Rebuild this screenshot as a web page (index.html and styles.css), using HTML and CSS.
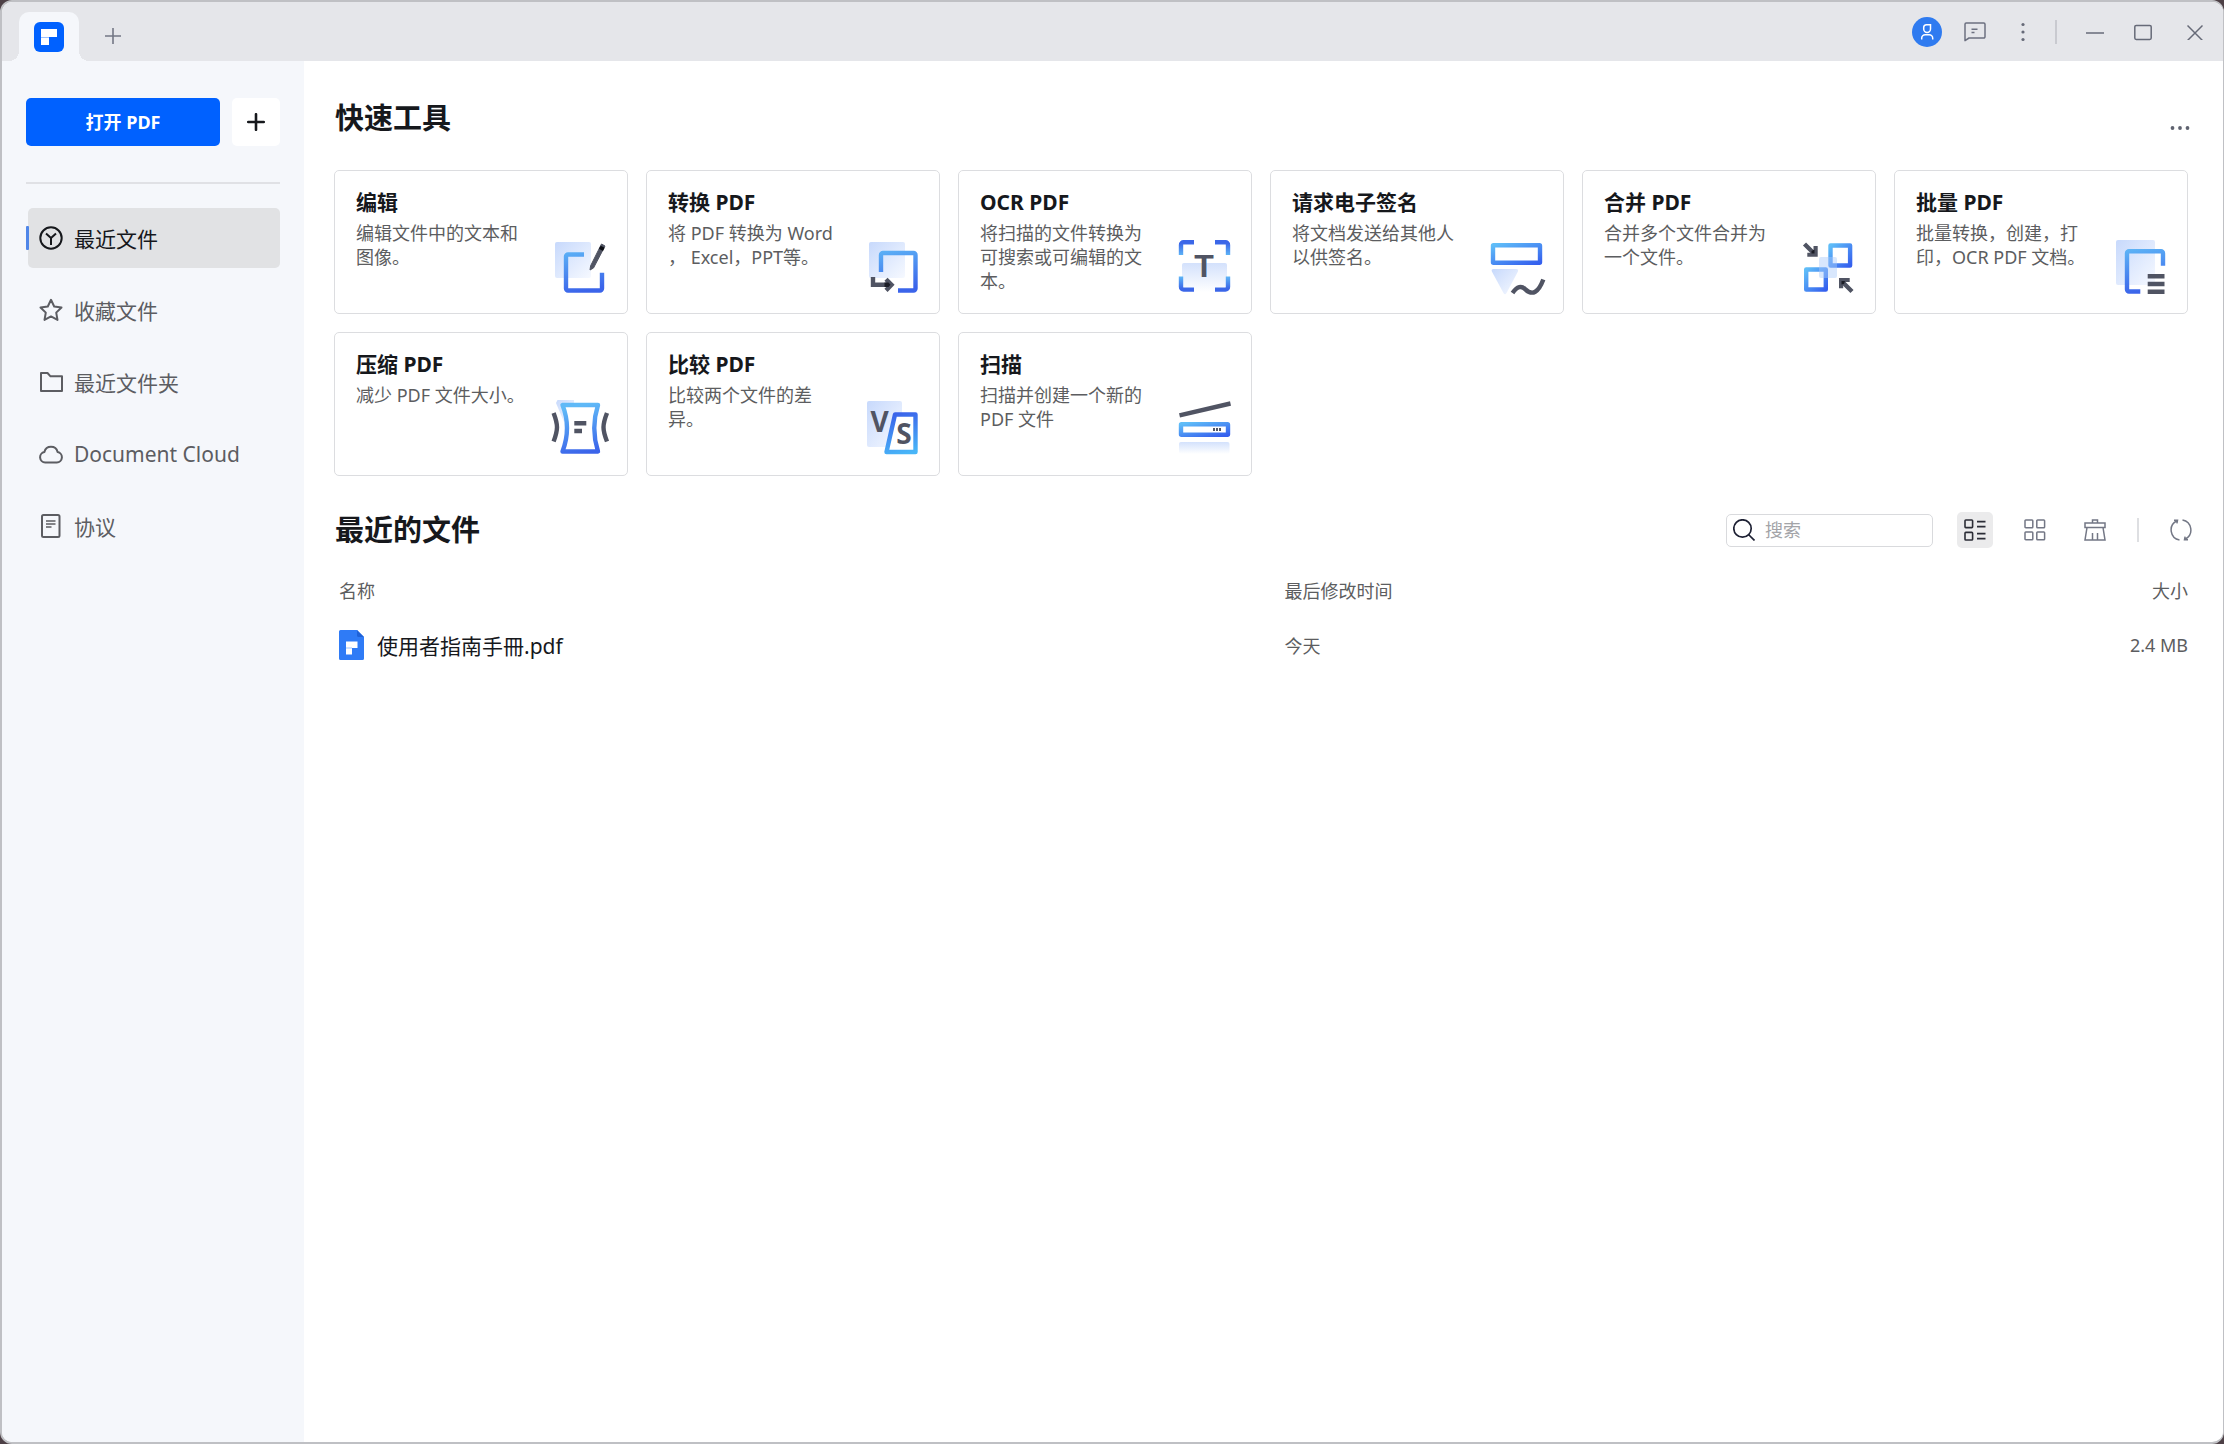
FILE: index.html
```html
<!DOCTYPE html>
<html lang="zh-CN">
<head>
    <meta charset="UTF-8">
    <meta name="viewport" content="width=device-width, initial-scale=1.0">
    <title>PDF</title>
    <link rel="stylesheet" href="styles.css">
</head>
<body>
    <!-- shared gradients for the tool icons -->
    <svg class="defs" width="0" height="0" aria-hidden="true">
        <defs>
            <linearGradient id="down" gradientUnits="userSpaceOnUse" x1="20" y1="10" x2="30" y2="56">
                <stop offset="0" stop-color="#5fb9f7"/>
                <stop offset="1" stop-color="#3b64ea"/>
            </linearGradient>
            <linearGradient id="up" gradientUnits="userSpaceOnUse" x1="34" y1="16" x2="44" y2="56">
                <stop offset="0" stop-color="#3b64ea"/>
                <stop offset="1" stop-color="#48b6f8"/>
            </linearGradient>
            <linearGradient id="box" x1="0" y1="0" x2="1" y2="1">
                <stop offset="0" stop-color="#5fbdf8"/>
                <stop offset="1" stop-color="#3560ee"/>
            </linearGradient>
            <linearGradient id="bracketTop" gradientUnits="userSpaceOnUse" x1="0" y1="4" x2="0" y2="20">
                <stop offset="0.2" stop-color="#3b66e8"/>
                <stop offset="1" stop-color="#5fb9f7"/>
            </linearGradient>
            <linearGradient id="bracketBottom" gradientUnits="userSpaceOnUse" x1="0" y1="40" x2="0" y2="56">
                <stop offset="0" stop-color="#5fb9f7"/>
                <stop offset="0.8" stop-color="#3b66e8"/>
            </linearGradient>
            <linearGradient id="soft" x1="0" y1="0" x2="1" y2="1">
                <stop offset="0" stop-color="#c7d9fc"/>
                <stop offset="1" stop-color="#f6f9ff"/>
            </linearGradient>
            <linearGradient id="fade" x1="0" y1="0" x2="0" y2="1">
                <stop offset="0" stop-color="#d3e1fc"/>
                <stop offset="1" stop-color="#ffffff"/>
            </linearGradient>
        </defs>
    </svg>

    <div class="window">
        <header class="titlebar">
            <button class="tab" aria-label="主页">
                <svg width="30" height="30" viewBox="0 0 30 30">
                    <rect width="30" height="30" rx="6" fill="#0061ff"/>
                    <path d="M7 7h16v8H7z" fill="#fff"/>
                    <path d="M7 16h8v7H7z" fill="#fff"/>
                    <path d="M7 15h8v1H7z" fill="#9cc2ff"/>
                </svg>
            </button>
            <button class="new-tab" aria-label="新标签页">
                <svg width="16" height="16" viewBox="0 0 16 16" stroke="#737785" stroke-width="1.6"><path d="M8 0v16M0 8h16"/></svg>
            </button>
            <div class="window-tools">
                <button class="win-btn" aria-label="账户">
                    <svg width="30" height="30" viewBox="0 0 30 30" fill="none" stroke="#fff" stroke-width="1.5">
                        <circle cx="15" cy="15" r="15" fill="#2f7bf0" stroke="none"/>
                        <path d="M14.5 7.8h4v4.2a3.4 3.4 0 0 1-6.8 0v-1.4a2.8 2.8 0 0 1 2.8-2.8z"/>
                        <path d="M9.7 22.5v-1.2a3.5 3.5 0 0 1 3.5-3.5h4a3.5 3.5 0 0 1 3.5 3.5v1.2"/>
                    </svg>
                </button>
                <button class="win-btn" aria-label="消息">
                    <svg width="22" height="20" viewBox="0 0 22 20" fill="none" stroke="#6c7080" stroke-width="1.5">
                        <path d="M1 18.6V2.2A1.2 1.2 0 0 1 2.2 1h17.6A1.2 1.2 0 0 1 21 2.2v12.6a1.2 1.2 0 0 1-1.2 1.2H5z" stroke-linejoin="round"/>
                        <path d="M7.5 7.2h6M7.5 10.4h3"/>
                    </svg>
                </button>
                <button class="win-btn" aria-label="更多">
                    <svg width="4" height="20" viewBox="0 0 4 20" fill="#666a78"><circle cx="2" cy="2.5" r="1.6"/><circle cx="2" cy="10" r="1.6"/><circle cx="2" cy="17.5" r="1.6"/></svg>
                </button>
                <span class="win-divider"></span>
                <button class="win-btn" aria-label="最小化">
                    <svg width="18" height="18" viewBox="0 0 18 18" stroke="#666a78" stroke-width="1.5"><path d="M0 10h18"/></svg>
                </button>
                <button class="win-btn" aria-label="最大化">
                    <svg width="18" height="18" viewBox="0 0 18 18" fill="none" stroke="#666a78" stroke-width="1.5"><rect x="0.8" y="2.4" width="16.4" height="14" rx="1.4"/></svg>
                </button>
                <button class="win-btn close" aria-label="关闭">
                    <svg width="16" height="16" viewBox="0 0 16 16" stroke="#666a78" stroke-width="1.5"><path d="M.5 1.5l15 15M15.5 1.5l-15 15"/></svg>
                </button>
            </div>
        </header>

        <div class="body">
            <aside class="sidebar">
                <div class="open-row">
                    <button class="open-btn">打开 PDF</button>
                    <button class="add-btn" aria-label="新建">
                        <svg width="18" height="18" viewBox="0 0 18 18" stroke="#16181c" stroke-width="2.6" stroke-linecap="round"><path d="M9 1.2v15.6M1.2 9h15.6"/></svg>
                    </button>
                </div>
                <nav class="menu">
                    <a href="#recent" class="menu-item active">
                        <svg class="menu-icon" viewBox="0 0 24 24">
                            <circle cx="12" cy="12" r="10.7"/>
                            <path d="M7 7.5l5 4.5 5-4.5M12 12v7"/>
                        </svg>
                        最近文件
                    </a>
                    <a href="#starred" class="menu-item">
                        <svg class="menu-icon" viewBox="0 0 24 24">
                            <path d="M12 1.8l3.2 6.7 7.3 1-5.3 5.1 1.3 7.3-6.5-3.5-6.5 3.5 1.3-7.3L1.5 9.5l7.3-1z"/>
                        </svg>
                        收藏文件
                    </a>
                    <a href="#folders" class="menu-item">
                        <svg class="menu-icon" viewBox="0 0 24 24">
                            <path d="M2 3h6.5l3 3.3H23V21H2z"/>
                        </svg>
                        最近文件夹
                    </a>
                    <a href="#cloud" class="menu-item">
                        <svg class="menu-icon" viewBox="0 0 24 24">
                            <path d="M6.2 20.5a5.3 5.3 0 0 1-.8-10.5 6.8 6.8 0 0 1 13.2 0 5.3 5.3 0 0 1-.8 10.5z"/>
                        </svg>
                        Document Cloud
                    </a>
                    <a href="#agreement" class="menu-item">
                        <svg class="menu-icon" viewBox="0 0 24 24">
                            <rect x="3" y="1" width="17.5" height="22" rx="1.5"/>
                            <path d="M7 7h9.5M7 10h9.5M7 13h5.5" stroke-width="1.5"/>
                        </svg>
                        协议
                    </a>
                </nav>
            </aside>

            <main class="main">
                <div class="section-head">
                    <h1>快速工具</h1>
                    <button class="more-btn" aria-label="更多工具">
                        <svg width="20" height="4" viewBox="0 0 20 4" fill="#5f6370"><circle cx="2.5" cy="2" r="1.9"/><circle cx="10" cy="2" r="1.9"/><circle cx="17.5" cy="2" r="1.9"/></svg>
                    </button>
                </div>

                <div class="tools">
                    <a href="#edit" class="card">
                        <h2>编辑</h2>
                        <p>编辑文件中的文本和图像。</p>
                        <svg class="card-icon" viewBox="0 0 60 60">
                            <rect x="5" y="6" width="36" height="36" rx="2" fill="url(#soft)"/>
                            <path d="M34 18.5H18a2 2 0 0 0-2 2V52.5a2 2 0 0 0 2 2H50a2 2 0 0 0 2-2V36.7" fill="none" stroke="url(#down)" stroke-width="4.4"/>
                            <path d="M40 34l.6-4.2L51.5 8l3.5 2L43.5 32z" fill="#505463" stroke="#505463"/>
                            <path d="M49.8 11.2l4 2.2" stroke="#0c0e14" stroke-width="3.5"/>
                        </svg>
                    </a>
                    <a href="#convert" class="card">
                        <h2>转换 PDF</h2>
                        <p>将 PDF 转换为 Word<br>， Excel，PPT等。</p>
                        <svg class="card-icon" viewBox="0 0 60 60">
                            <rect x="7" y="6" width="36" height="36" rx="2" fill="url(#soft)"/>
                            <path d="M19 36V19a2 2 0 0 1 2-2H51.5a2 2 0 0 1 2 2V52.5a2 2 0 0 1-2 2H36" fill="none" stroke="url(#down)" stroke-width="4.4"/>
                            <path d="M11 41v7.8h17" fill="none" stroke="#505463" stroke-width="4.4"/>
                            <path d="M24 43.2l5.5 5.6-5.5 5.6" fill="none" stroke="#505463" stroke-width="4.4"/>
                            <path d="M22.5 46.6h4l2 2.2-2 2.2h-4z" fill="#1b1d26"/>
                        </svg>
                    </a>
                    <a href="#ocr" class="card">
                        <h2>OCR PDF</h2>
                        <p>将扫描的文件转换为可搜索或可编辑的文本。</p>
                        <svg class="card-icon" viewBox="0 0 60 60">
                            <rect x="8" y="27" width="45" height="29" rx="2" fill="url(#fade)"/>
                            <g fill="none" stroke="url(#bracketTop)" stroke-width="4.4">
                                <path d="M7 19V9a2.6 2.6 0 0 1 2.6-2.7H20"/>
                                <path d="M54 19V9a2.6 2.6 0 0 0-2.6-2.7H41"/>
                            </g>
                            <g fill="none" stroke="url(#bracketBottom)" stroke-width="4.4">
                                <path d="M7 40.5v10.4a2.6 2.6 0 0 0 2.6 2.7H20"/>
                                <path d="M54 40.5v10.4a2.6 2.6 0 0 1-2.6 2.7H41"/>
                            </g>
                            <text class="glyph glyph-t" x="30" y="41">T</text>
                        </svg>
                    </a>
                    <a href="#sign" class="card">
                        <h2>请求电子签名</h2>
                        <p>将文档发送给其他人以供签名。</p>
                        <svg class="card-icon" viewBox="0 0 60 60">
                            <rect x="7" y="9.2" width="47" height="17.5" rx="0.5" fill="none" stroke="url(#box)" stroke-width="4.4"/>
                            <path d="M7.5 33h22.5q3 0 1.8 2.8L20.5 57q-1.5 2.4-3 0L6 35.8Q4.8 33 7.5 33z" fill="url(#soft)"/>
                            <path d="M26.5 57q7-10 13-3.5 10.5 9.5 17.8-10" fill="none" stroke="#505463" stroke-width="4.4"/>
                        </svg>
                    </a>
                    <a href="#merge" class="card">
                        <h2>合并 PDF</h2>
                        <p>合并多个文件合并为一个文件。</p>
                        <svg class="card-icon" viewBox="0 0 60 60">
                            <rect x="32.5" y="9.5" width="19.6" height="20" fill="none" stroke="url(#box)" stroke-width="4.4" stroke-linejoin="round"/>
                            <rect x="8.2" y="33.5" width="19.6" height="20" fill="none" stroke="url(#box)" stroke-width="4.4" stroke-linejoin="round"/>
                            <rect x="21" y="21" width="18" height="21" rx="2" fill="#a9c9fb" opacity="0.45"/>
                            <path d="M6.5 8l10 10M54 55.5l-10-10" stroke="#505463" stroke-width="4.4"/>
                            <path d="M19.7 10v10.7H9.3v-4h5l1.2-2V10zM41 52.3V42h10.7v4h-5l-1.5 2v4.3z" fill="#505463"/>
                            <path d="M13.5 15l3-1.5v4h-3zM43.5 45h3.5l-1 3-2.5.5z" fill="#1b1d26"/>
                        </svg>
                    </a>
                    <a href="#batch" class="card">
                        <h2>批量 PDF</h2>
                        <p>批量转换，创建，打印，OCR PDF 文档。</p>
                        <svg class="card-icon" viewBox="0 0 60 60">
                            <rect x="6" y="4" width="39" height="45" rx="2" fill="url(#soft)"/>
                            <path d="M53 29.7V17.2a2 2 0 0 0-2-2H19a2 2 0 0 0-2 2V53.5a2 2 0 0 0 2 2H30.3" fill="none" stroke="url(#down)" stroke-width="4.4"/>
                            <path d="M37.7 40.3h16.8M37.7 48h16.8M37.7 55.7h16.8" stroke="#505463" stroke-width="4.6"/>
                        </svg>
                    </a>
                    <a href="#compress" class="card">
                        <h2>压缩 PDF</h2>
                        <p>减少 PDF 文件大小。</p>
                        <svg class="card-icon" viewBox="0 0 60 60">
                            <path d="M7.5 2H24v16L14 24 6 5z" fill="url(#soft)"/>
                            <path d="M12.5 7H48Q40.5 30 48 53.5H12.5Q21.5 30 12.5 7z" fill="#fff" stroke="url(#down)" stroke-width="4.4" stroke-linejoin="round"/>
                            <path d="M3.6 15Q7 24 7 29.3T3.6 43.500M57 15q-3.500 9-3.500 14.300T57 43.500" fill="none" stroke="#505463" stroke-width="4.4"/>
                            <path d="M24.3 25.3h12M24.3 33h7.7" stroke="#505463" stroke-width="4.4"/>
                        </svg>
                    </a>
                    <a href="#compare" class="card">
                        <h2>比较 PDF</h2>
                        <p>比较两个文件的差<br>异。</p>
                        <svg class="card-icon" viewBox="0 0 60 60">
                            <rect x="5" y="3" width="35" height="46" rx="2" fill="url(#soft)"/>
                            <path d="M33 16.5H53.5V54H24.5z" fill="#fff" stroke="url(#up)" stroke-width="4.4" stroke-linejoin="round"/>
                            <text class="glyph glyph-vs" x="17.5" y="34">V</text>
                            <text class="glyph glyph-vs" x="42" y="46">S</text>
                        </svg>
                    </a>
                    <a href="#scan" class="card">
                        <h2>扫描</h2>
                        <p>扫描并创建一个新的 PDF 文件</p>
                        <svg class="card-icon" viewBox="0 0 60 60">
                            <path d="M5.5 17.3L56.5 5.5" stroke="#505463" stroke-width="4.4"/>
                            <rect x="7" y="26.2" width="47" height="10.6" rx="0.5" fill="#fff" stroke="url(#box)" stroke-width="4.4"/>
                            <path d="M39 31.5h2M42 31.5h2M45 31.5h2" stroke="#505463" stroke-width="3"/>
                            <rect x="5" y="44" width="50.5" height="12" rx="2" fill="url(#fade)"/>
                        </svg>
                    </a>
                </div>

                <div class="section-head recent-head">
                    <h1>最近的文件</h1>
                    <div class="toolbar">
                        <label class="search">
                            <svg width="22" height="22" viewBox="0 0 22 22" fill="none" stroke="#1d2033" stroke-width="1.7"><circle cx="9.5" cy="9.5" r="8.7"/><path d="M15.5 15.5l6 6"/></svg>
                            <input type="text" placeholder="搜索" aria-label="搜索">
                        </label>
                        <button class="tool-btn selected" aria-label="列表视图">
                            <svg width="22" height="22" viewBox="0 0 22 22" fill="none" stroke="#2b2d36" stroke-width="1.6"><rect x="1" y="1" width="7.6" height="7.6" rx="0.8"/><rect x="1" y="13.4" width="7.6" height="7.6" rx="0.8"/><path d="M13 2.6h8.5M13 7.6h8.5M13 14.6h8.5M13 19.6h8.5"/></svg>
                        </button>
                        <button class="tool-btn" aria-label="网格视图">
                            <svg width="22" height="22" viewBox="0 0 22 22" fill="none" stroke="#737785" stroke-width="1.5"><rect x="1" y="1" width="7.8" height="7.8" rx="0.8"/><rect x="1" y="13" width="7.8" height="7.8" rx="0.8"/><rect x="12.8" y="1" width="7.8" height="7.8" rx="0.8"/><rect x="12.8" y="13" width="7.8" height="7.8" rx="0.8"/></svg>
                        </button>
                        <button class="tool-btn" aria-label="清除">
                            <svg width="22" height="22" viewBox="0 0 22 22" fill="none" stroke="#737785" stroke-width="1.5"><path d="M8.5 4V1h5v3M1 4h20v4.5H1zM3 8.5L1 21h20L19 8.5M8.5 21v-7M13.5 21v-7"/></svg>
                        </button>
                        <span class="tool-divider"></span>
                        <button class="tool-btn" aria-label="刷新">
                            <svg width="22" height="22" viewBox="0 0 22 22" fill="none" stroke="#737785" stroke-width="1.5"><path d="M9.5 21A10.2 10.2 0 0 1 6.5 2M4 1.2h3.5l-.6 3.2M12.5 1A10.2 10.2 0 0 1 15.5 20M18 20.8h-3.5l.6-3.2"/></svg>
                        </button>
                    </div>
                </div>

                <table class="files">
                    <thead>
                        <tr>
                            <th class="col-name">名称</th>
                            <th>最后修改时间</th>
                            <th class="col-size">大小</th>
                        </tr>
                    </thead>
                    <tbody>
                        <tr>
                            <td>
                                <a href="#file" class="file">
                                    <svg width="26" height="30" viewBox="0 0 26 30">
                                        <path d="M1.5 0H18l7 7v21.5a1.5 1.5 0 0 1-1.5 1.5h-22A1.5 1.5 0 0 1 0 28.5v-27A1.5 1.5 0 0 1 1.5 0z" fill="#2f7bf6"/>
                                        <path d="M18 0l7 7h-5.5A1.5 1.5 0 0 1 18 5.5z" fill="#1f62d8"/>
                                        <path d="M7 11.5h11.5v6.5H13v6.5H7z" fill="#fff"/>
                                        <path d="M7 18h6" stroke="#9cc2ff"/>
                                    </svg>
                                    使用者指南手冊.pdf
                                </a>
                            </td>
                            <td>今天</td>
                            <td class="col-size">2.4 MB</td>
                        </tr>
                    </tbody>
                </table>
            </main>
        </div>
    </div>
</body>
</html>
```
FILE: styles.css
```css
* {
    box-sizing: border-box;
}
body {
    margin: 0;
    background: #4d4046;
    color: #16181c;
    font-family: "Noto Sans", "Noto Sans CJK SC", sans-serif;
    font-size: 18px;
}
h1, h2, p {
    margin: 0;
}
a {
    color: inherit;
    text-decoration: none;
}
button {
    display: flex;
    align-items: center;
    justify-content: center;
    padding: 0;
    border: none;
    background: none;
    color: inherit;
    font: inherit;
    cursor: pointer;
}
svg {
    display: block;
    flex-shrink: 0;
}
.defs {
    position: absolute;
}

.window {
    display: flex;
    flex-direction: column;
    min-height: 100vh;
    border: 2px solid #bfc0c4;
    border-right-width: 1px;
    border-radius: 12px;
    background: #fff;
    overflow: hidden;
}

/* title bar */
.titlebar {
    display: flex;
    align-items: flex-end;
    height: 59px;
    padding-left: 17px;
    background: #e5e6ea;
}
.tab {
    position: relative;
    width: 60px;
    height: 49px;
    border-radius: 10px 10px 0 0;
    background: #f5f7fb;
}
.tab::before,
.tab::after {
    content: "";
    position: absolute;
    bottom: 0;
    width: 10px;
    height: 10px;
}
.tab::before {
    right: 100%;
    background: radial-gradient(circle at 0 0, transparent 10px, #f5f7fb 10px);
}
.tab::after {
    left: 100%;
    background: radial-gradient(circle at 100% 0, transparent 10px, #f5f7fb 10px);
}
.new-tab {
    width: 48px;
    height: 50px;
    margin-left: 10px;
}
.window-tools {
    display: flex;
    align-items: center;
    height: 100%;
    margin-left: auto;
    padding-right: 4px;
}
.win-btn {
    width: 48px;
    height: 48px;
}
.win-divider {
    width: 2px;
    height: 24px;
    margin: 0 14px 0 8px;
    background: #c9cad0;
}
.close {
    margin-left: 4px;
}

.body {
    display: flex;
    flex: 1;
}

/* sidebar */
.sidebar {
    width: 302px;
    flex-shrink: 0;
    padding: 37px 24px;
    background: #f5f7fb;
}
.open-row {
    display: flex;
    gap: 12px;
    padding-bottom: 36px;
    border-bottom: 2px solid #e0e1e5;
}
.open-btn {
    flex: 1;
    height: 48px;
    padding-bottom: 2px;
    border-radius: 5px;
    background: #0061ff;
    color: #fff;
    font-weight: 700;
}
.add-btn {
    width: 48px;
    height: 48px;
    border-radius: 5px;
    background: #fff;
}
.menu {
    display: flex;
    flex-direction: column;
    gap: 12px;
    margin-top: 24px;
    padding-left: 2px;
}
.menu-item {
    position: relative;
    display: flex;
    align-items: center;
    gap: 11px;
    height: 60px;
    padding-left: 11px;
    border-radius: 5px;
    color: #5c5d62;
    font-size: 21px;
}
.menu-item.active {
    background: #e1e2e4;
    color: #16181c;
}
.menu-item.active::before {
    content: "";
    position: absolute;
    left: -2px;
    width: 3px;
    height: 24px;
    border-radius: 1px;
    background: #4f86e8;
}
.menu-icon {
    width: 24px;
    height: 24px;
    fill: none;
    stroke: currentColor;
    stroke-width: 2;
    stroke-linejoin: round;
}

/* main area */
.main {
    flex: 1;
    padding: 37px 35px 37px 30px;
}
.section-head {
    display: flex;
    align-items: flex-end;
    justify-content: space-between;
    height: 40px;
    margin-bottom: 32px;
}
.section-head h1 {
    padding-left: 1px;
    font-size: 29px;
    line-height: 40px;
}
.more-btn {
    width: 20px;
    height: 20px;
    margin-right: -2px;
}
.tools {
    display: grid;
    grid-template-columns: repeat(6, 1fr);
    gap: 18px;
}
.card {
    position: relative;
    min-height: 144px;
    padding: 16px 21px;
    border: 1px solid #dcdde0;
    border-radius: 5px;
}
.card h2 {
    margin-bottom: 4px;
    font-size: 21px;
    line-height: 30px;
}
.card p {
    width: 173px;
    color: #5c5d60;
    line-height: 24px;
}
.card-icon {
    position: absolute;
    right: 17px;
    bottom: 17px;
    width: 60px;
    height: 60px;
}
.glyph {
    fill: #505463;
    font-weight: 700;
    text-anchor: middle;
}
.glyph-t {
    font-family: "Liberation Sans", sans-serif;
    font-size: 32px;
}
.glyph-vs {
    font-size: 28px;
}

/* recent files */
.recent-head {
    align-items: center;
    margin: 34px 0 16px;
}
.toolbar {
    display: flex;
    align-items: center;
    gap: 24px;
    margin-right: -11px;
}
.search {
    display: flex;
    align-items: center;
    gap: 10px;
    width: 207px;
    height: 33px;
    padding: 0 6px;
    border: 1px solid #d9dadd;
    border-radius: 5px;
}
.search input {
    flex: 1;
    min-width: 0;
    padding: 0;
    border: none;
    outline: none;
    background: none;
    font: inherit;
}
.search input::placeholder {
    color: #a3a4a8;
}
.tool-btn {
    width: 36px;
    height: 36px;
    border-radius: 5px;
}
.tool-btn.selected {
    background: #ebebec;
}
.tool-divider {
    width: 2px;
    height: 24px;
    background: #dedfe2;
}
.files {
    width: 100%;
    border-collapse: collapse;
    table-layout: fixed;
    color: #5c5d60;
}
.files th {
    height: 48px;
    padding: 0 0 0 5px;
    font-weight: 400;
    text-align: left;
}
.files td {
    height: 61px;
    padding: 0 0 0 5px;
}
.files .col-name {
    width: 51%;
}
.files .col-size {
    text-align: right;
}
.file {
    display: flex;
    align-items: center;
    gap: 12px;
    color: #16181c;
    font-size: 21px;
}
```
